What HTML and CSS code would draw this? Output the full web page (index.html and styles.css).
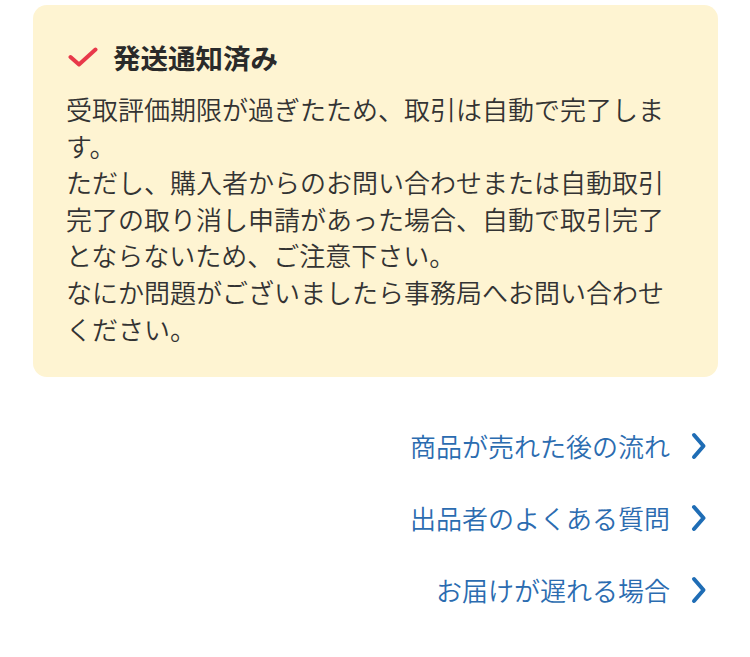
FILE: index.html
```html
<!DOCTYPE html>
<html lang="ja">
<head>
<meta charset="utf-8">
<link rel="stylesheet" href="styles.css">
</head>
<body>
<div class="page">
  <section class="notice">
    <h2 class="notice-title">
      <svg class="check" viewBox="0 0 30 22" width="30" height="22" aria-hidden="true">
        <path d="M2.5 11 L11 18.5 L27.5 3.5" fill="none" stroke="#e8394a" stroke-width="4" stroke-linecap="round" stroke-linejoin="round"/>
      </svg>
      <span>発送通知済み</span>
    </h2>
    <p class="notice-body">受取評価期限が過ぎたため、取引は自動で完了します。<br>ただし、購入者からのお問い合わせまたは自動取引完了の取り消し申請があった場合、自動で取引完了とならないため、ご注意下さい。<br>なにか問題がございましたら事務局へお問い合わせください。</p>
  </section>
  <nav class="links">
    <a class="link" href="#"><span>商品が売れた後の流れ</span><svg class="chev" viewBox="0 0 16 28" width="16" height="28" aria-hidden="true"><path d="M3 3 L12.5 14 L3 25" fill="none" stroke="#1f6db5" stroke-width="4" stroke-linecap="round" stroke-linejoin="round"/></svg></a>
    <a class="link" href="#"><span>出品者のよくある質問</span><svg class="chev" viewBox="0 0 16 28" width="16" height="28" aria-hidden="true"><path d="M3 3 L12.5 14 L3 25" fill="none" stroke="#1f6db5" stroke-width="4" stroke-linecap="round" stroke-linejoin="round"/></svg></a>
    <a class="link" href="#"><span>お届けが遅れる場合</span><svg class="chev" viewBox="0 0 16 28" width="16" height="28" aria-hidden="true"><path d="M3 3 L12.5 14 L3 25" fill="none" stroke="#1f6db5" stroke-width="4" stroke-linecap="round" stroke-linejoin="round"/></svg></a>
  </nav>
</div>
</body>
</html>
```

FILE: styles.css
```css
html, body {
  margin: 0;
  padding: 0;
  background: #ffffff;
}

body {
  font-family: "Noto Sans CJK JP", "Noto Sans", sans-serif;
  color: #333333;
}

.page {
  padding: 5px 32px 0 33px;
}

.notice {
  background: #fef4d2;
  border-radius: 14px;
  padding: 34px 33px 30px 33px;
}

.notice-title {
  display: flex;
  align-items: center;
  gap: 15px;
  margin: 0 0 16px 0;
  padding-left: 2px;
  font-size: 27.5px;
  line-height: 36px;
  font-weight: 700;
  color: #2a2a2a;
}

.check {
  flex: none;
  display: block;
}

.notice-body {
  margin: 0;
  font-size: 26px;
  line-height: 36.6px;
  font-weight: 350;
  color: #333333;
}

.links {
  display: flex;
  flex-direction: column;
  align-items: flex-end;
  gap: 36px;
  margin-top: 51px;
  padding-right: 11px;
}

.link {
  display: flex;
  align-items: center;
  gap: 20px;
  font-size: 26px;
  line-height: 36px;
  font-weight: 350;
  color: #2b6cb0;
  text-decoration: none;
}

.link span {
  margin-right: 1px;
}

.chev {
  display: block;
  flex: none;
}
```
